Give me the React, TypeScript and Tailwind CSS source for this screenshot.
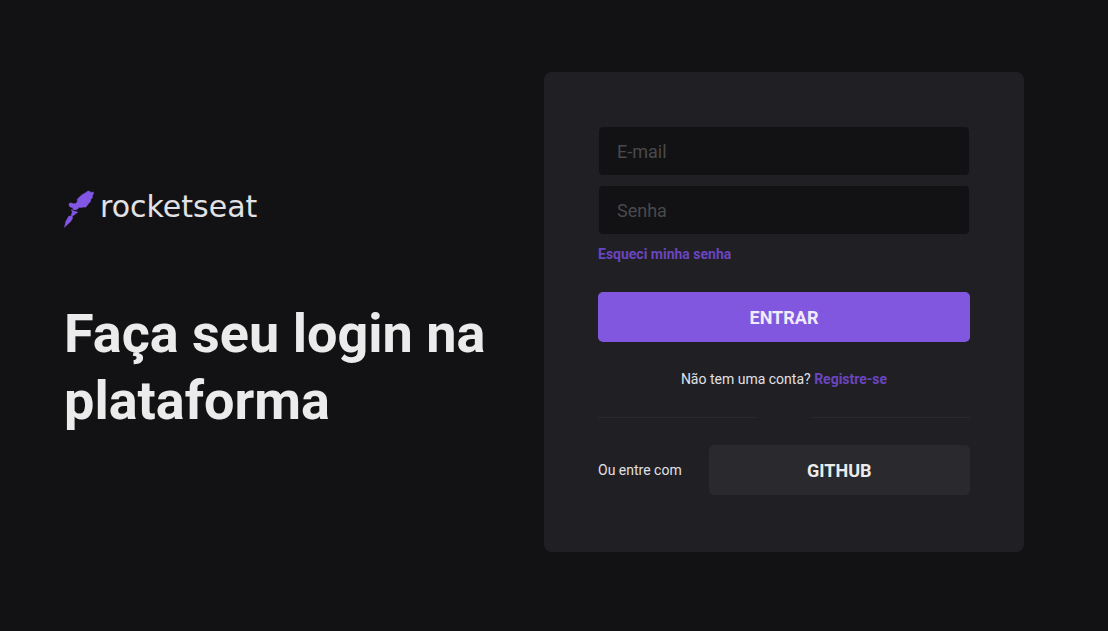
import React from 'react';

function Logo() {
  return (
    <div className="flex h-[38px] items-start gap-1">
      <svg
        viewBox="0 0 32 38"
        className="h-[38px] w-8 shrink-0 fill-[#8257e5] stroke-[#8257e5]"
        strokeWidth="0.5"
        strokeLinejoin="round"
        aria-hidden="true"
      >
        <path d="M22 2.4 24 1l1.6.2.9 1h2.8l.4 1.1-1.5 2.9.4 1.4-1.8 2-.4 2.1-2 2-1.6 2.4-1.5 1.2-1.3-.4-2.8.6-2.3-.2-1 1.5-2.7 1.2-2.4-.6.2-1.7-2.9-.7-1.1-1.7.4-2.2h2.4l1.3.7 2.6-.3 1.6-1.4v-2.9l2.2-2.3 2.3-2Z" />
        <path d="m7.3 19.8 2.7 1.5 3.8.8-2.5 2-2.6 1.8-1.6-1 1.2-2.5Z" />
        <path d="m4.7 26.3 3.3-.6.7 2.4-2 3.4L.5 37.3l1.3-5.8Z" />
      </svg>
      <span className="font-['DejaVu_Sans',sans-serif] text-[30px] leading-[34px] text-[#e1e1e6]">rocketseat</span>
    </div>
  );
}

const inputClass =
  'h-[50px] w-full rounded-[5px] border border-[#202024] bg-[#121214] px-[18px] text-lg text-[#e1e1e6] outline-none placeholder:text-[#49494d] focus:border-[#8257e5]';

function LoginForm() {
  return (
    <form
      className="flex min-h-[480px] w-full max-w-[480px] flex-col rounded-lg bg-[#202024] p-[54px]"
      onSubmit={(event) => event.preventDefault()}
    >
      <div className="flex flex-col gap-[9px]">
        <input type="email" aria-label="E-mail" placeholder="E-mail" className={inputClass} />
        <input type="password" aria-label="Senha" placeholder="Senha" className={inputClass} />
      </div>
      <a href="#recuperar" className="mt-[9px] self-start text-sm font-bold text-[#6b45bf]">
        Esqueci minha senha
      </a>
      <button type="submit" className="mt-7 h-[50px] rounded-[5px] bg-[#8257e0] pt-0.5 text-lg font-bold text-[#f0ebfa]">
        ENTRAR
      </button>
      <p className="mt-[27px] text-center text-sm text-[#e1e1e6]">
        Não tem uma conta?{' '}
        <a href="#registro" className="font-bold text-[#6b45bf]">
          Registre-se
        </a>
      </p>
      <div className="mt-7 flex justify-between gap-[54px]" role="separator">
        <span className="h-px flex-1 bg-[#29292e]" />
        <span className="h-px flex-1 bg-[#29292e]" />
      </div>
      <div className="mt-[27px] flex items-center gap-[27px]">
        <span className="whitespace-nowrap text-sm text-[#e1e1e6]">Ou entre com</span>
        <button type="button" className="h-[50px] flex-1 rounded-[5px] bg-[#29292e] pt-0.5 text-lg font-bold text-[#ebebeb]">
          GITHUB
        </button>
      </div>
    </form>
  );
}

export default function App() {
  return (
    <main className="flex min-h-screen items-center justify-center bg-[#121214] pr-5 pb-[7px] font-[Roboto,sans-serif]">
      <div className="grid w-full max-w-[960px] grid-cols-2 items-center">
        <section className="flex flex-col gap-[72px]">
          <Logo />
          <h1 className="text-[54px] leading-[67px] font-bold text-[#ebebeb]">Faça seu login na plataforma</h1>
        </section>
        <LoginForm />
      </div>
    </main>
  );
}
